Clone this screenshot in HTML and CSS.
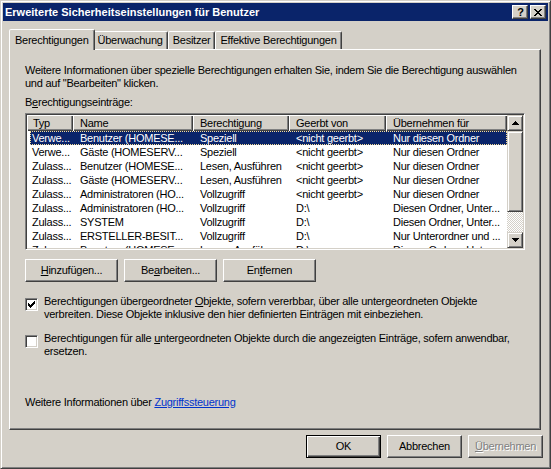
FILE: index.html
```html
<!DOCTYPE html>
<html lang="de">
<head>
<meta charset="utf-8">
<title>Erweiterte Sicherheitseinstellungen für Benutzer</title>
<link rel="stylesheet" href="styles.css">
</head>
<body>
<div class="window">
  <div class="titlebar">
    <span class="title">Erweiterte Sicherheitseinstellungen für Benutzer</span>
    <div class="caption-buttons">
      <span class="cbtn help">?</span>
      <span class="cbtn close">
        <svg width="8" height="7" viewBox="0 0 8 7" shape-rendering="crispEdges"><path d="M0 0h2v1H0zM6 0h2v1H6zM1 1h2v1H1zM5 1h2v1H5zM2 2h4v1H2zM3 3h2v1H3zM2 4h4v1H2zM1 5h2v1H1zM5 5h2v1H5zM0 6h2v1H0zM6 6h2v1H6z" fill="#000"/></svg>
      </span>
    </div>
  </div>
  <div class="client">
    <div class="tabs">
      <div class="tab selected">Berechtigungen</div>
      <div class="tab">Überwachung</div>
      <div class="tab">Besitzer</div>
      <div class="tab">Effektive Berechtigungen</div>
    </div>
    <div class="panel">
      <p class="info">Weitere Informationen über spezielle Berechtigungen erhalten Sie, indem Sie die Berechtigung auswählen<br>und auf "Bearbeiten" klicken.</p>
      <div class="label">B<u>e</u>rechtigungseinträge:</div>
      <div class="listview">
        <div class="lv-main">
          <div class="lv-header">
            <div class="hcell first">Typ</div>
            <div class="hcell">Name</div>
            <div class="hcell">Berechtigung</div>
            <div class="hcell">Geerbt von</div>
            <div class="hcell">Übernehmen für</div>
          </div>
          <div class="lv-rows">
            <div class="row selected"><span>Verwe...</span><span>Benutzer (HOMESE...</span><span>Speziell</span><span>&lt;nicht geerbt&gt;</span><span>Nur diesen Ordner</span></div>
            <div class="row"><span>Verwe...</span><span>Gäste (HOMESERV...</span><span>Speziell</span><span>&lt;nicht geerbt&gt;</span><span>Nur diesen Ordner</span></div>
            <div class="row"><span>Zulass...</span><span>Benutzer (HOMESE...</span><span>Lesen, Ausführen</span><span>&lt;nicht geerbt&gt;</span><span>Nur diesen Ordner</span></div>
            <div class="row"><span>Zulass...</span><span>Gäste (HOMESERV...</span><span>Lesen, Ausführen</span><span>&lt;nicht geerbt&gt;</span><span>Nur diesen Ordner</span></div>
            <div class="row"><span>Zulass...</span><span>Administratoren (HO...</span><span>Vollzugriff</span><span>&lt;nicht geerbt&gt;</span><span>Nur diesen Ordner</span></div>
            <div class="row"><span>Zulass...</span><span>Administratoren (HO...</span><span>Vollzugriff</span><span>D:\</span><span>Diesen Ordner, Unter...</span></div>
            <div class="row"><span>Zulass...</span><span>SYSTEM</span><span>Vollzugriff</span><span>D:\</span><span>Diesen Ordner, Unter...</span></div>
            <div class="row"><span>Zulass...</span><span>ERSTELLER-BESIT...</span><span>Vollzugriff</span><span>D:\</span><span>Nur Unterordner und ...</span></div>
            <div class="row"><span>Zulass...</span><span>Benutzer (HOMESE...</span><span>Lesen, Ausführen</span><span>D:\</span><span>Diesen Ordner, Unter...</span></div>
          </div>
        </div>
        <div class="vscroll">
          <div class="sb-btn">
            <svg width="7" height="4" viewBox="0 0 7 4" shape-rendering="crispEdges"><path d="M3 0h1v1H3zM2 1h3v1H2zM1 2h5v1H1zM0 3h7v1H0z" fill="#000"/></svg>
          </div>
          <div class="sb-thumb"></div>
          <div class="sb-track"></div>
          <div class="sb-btn">
            <svg width="7" height="4" viewBox="0 0 7 4" shape-rendering="crispEdges"><path d="M0 0h7v1H0zM1 1h5v1H1zM2 2h3v1H2zM3 3h1v1H3z" fill="#000"/></svg>
          </div>
        </div>
      </div>
      <div class="btnrow">
        <button class="btn"><u>H</u>inzufügen...</button>
        <button class="btn">Be<u>a</u>rbeiten...</button>
        <button class="btn">En<u>t</u>fernen</button>
      </div>
      <div class="check first-check">
        <span class="box">
          <svg width="7" height="7" viewBox="0 0 7 7" shape-rendering="crispEdges"><path d="M6 0h1v1H6zM5 1h2v1H5zM0 2h1v1H0zM4 2h3v1H4zM0 3h2v1H0zM3 3h3v1H3zM0 4h5v1H0zM1 5h3v1H1zM2 6h1v1H2z" fill="#000"/></svg>
        </span>
        <span class="check-text">Berechtigungen übergeordneter <u>O</u>bjekte, sofern vererbbar, über alle untergeordneten Objekte<br>verbreiten. Diese Objekte inklusive den hier definierten Einträgen mit einbeziehen.</span>
      </div>
      <div class="check second-check">
        <span class="box"></span>
        <span class="check-text">Berechtigungen für alle <u>u</u>ntergeordneten Objekte durch die angezeigten Einträge, sofern anwendbar,<br>ersetzen.</span>
      </div>
      <p class="more">Weitere Informationen über <a href="#" class="link">Zugriffssteuerung</a></p>
    </div>
    <div class="dlg-buttons">
      <button class="btn dlg default">OK</button>
      <button class="btn dlg">Abbrechen</button>
      <button class="btn dlg disabled"><u>Ü</u>bernehmen</button>
    </div>
  </div>
</div>
</body>
</html>
```
FILE: styles.css
```css
* {
  box-sizing: border-box;
  margin: 0;
  padding: 0;
}

html, body {
  background: #d4d0c8;
}

body {
  font: 11px/13px "Liberation Sans", Arial, sans-serif;
  letter-spacing: -0.25px;
  color: #000;
}

.window {
  width: 551px;
  height: 469px;
  border: 1px solid;
  border-color: #d4d0c8 #404040 #404040 #d4d0c8;
  box-shadow: inset 1px 1px #fff, inset -1px -1px #808080;
  padding: 2px;
  display: flex;
  flex-direction: column;
  background: #d4d0c8;
}

/* Title bar */
.titlebar {
  height: 18px;
  flex: none;
  background: #0a246a;
  display: flex;
  align-items: center;
  padding: 0 2px 0 2px;
}

.title {
  flex: 1;
  color: #fff;
  font-weight: bold;
  letter-spacing: 0;
  white-space: nowrap;
}

.caption-buttons {
  display: flex;
  gap: 2px;
}

.cbtn {
  width: 16px;
  height: 14px;
  background: #d4d0c8;
  border: 1px solid;
  border-color: #fff #404040 #404040 #fff;
  box-shadow: inset -1px -1px #808080;
  display: flex;
  align-items: center;
  justify-content: center;
}

.cbtn.help {
  font-weight: bold;
  font-size: 11px;
  line-height: 12px;
  letter-spacing: 0;
  padding-left: 1px;
}

/* Client area */
.client {
  flex: 1;
  display: flex;
  flex-direction: column;
  padding: 8px 6px 8px 6px;
}

.tabs {
  height: 20px;
  flex: none;
  display: flex;
  align-items: flex-start;
  padding-left: 2px;
  margin-right: 1px;
}

.tab {
  margin-top: 2px;
  height: 18px;
  padding: 2px 4px 0 4px;
  border: 1px solid;
  border-bottom: none;
  border-color: #fff #404040 transparent #fff;
  border-radius: 2px 2px 0 0;
  box-shadow: inset -1px 0 #808080;
  background: #d4d0c8;
  white-space: nowrap;
}

.tab.selected {
  margin: 0 -2px 0 -2px;
  height: 21px;
  padding: 4px 5px 0 5px;
  position: relative;
  z-index: 1;
}

.panel {
  flex: 1;
  margin-right: 1px;
  border: 1px solid;
  border-color: #fff #404040 #404040 #fff;
  box-shadow: inset -1px -1px #808080;
  padding: 14px 15px 20px 15px;
  display: flex;
  flex-direction: column;
}

.info,
.check-text {
  white-space: nowrap;
}

.label {
  margin-top: 6px;
}

/* List view */
.listview {
  margin-top: 4px;
  width: 500px;
  height: 137px;
  flex: none;
  background: #fff;
  border: 1px solid;
  border-color: #808080 #fff #fff #808080;
  box-shadow: inset 1px 1px #404040, inset -1px -1px #d4d0c8;
  padding: 1px;
  display: flex;
}

.lv-main {
  width: 480px;
  display: flex;
  flex-direction: column;
}

.lv-header {
  display: grid;
  grid-template-columns: 46px 120px 96px 97px 121px;
  height: 16px;
  flex: none;
}

.hcell {
  background: #d4d0c8;
  box-shadow: inset 1px 1px #fff, inset -1px -1px #404040, inset -2px -2px #808080;
  padding-left: 7px;
  line-height: 16px;
  white-space: nowrap;
  overflow: hidden;
}

.hcell.first {
  padding-left: 6px;
}

.lv-rows {
  height: 117px;
  overflow: hidden;
}

.row {
  display: grid;
  grid-template-columns: 43px 120px 96px 97px 121px;
  margin-left: 3px;
  height: 14px;
  line-height: 14px;
  white-space: nowrap;
}

.row span {
  overflow: hidden;
  padding-left: 7px;
}

.row span:first-child {
  padding-left: 2px;
}

.row.selected {
  background: #0a246a;
  color: #fff;
  outline: 1px dotted #f5db95;
  outline-offset: -1px;
}

.vscroll {
  width: 16px;
  display: flex;
  flex-direction: column;
}

.sb-btn,
.sb-thumb {
  background: #d4d0c8;
  border: 1px solid;
  border-color: #d4d0c8 #404040 #404040 #d4d0c8;
  box-shadow: inset 1px 1px #fff, inset -1px -1px #808080;
}

.sb-btn {
  height: 16px;
  flex: none;
  display: flex;
  align-items: center;
  justify-content: center;
}

.sb-thumb {
  height: 81px;
  flex: none;
}

.sb-track {
  flex: 1;
  background: repeating-conic-gradient(#d4d0c8 0 25%, #fff 0 50%) 0 0 / 2px 2px;
}

/* Buttons */
.btn {
  font: inherit;
  letter-spacing: inherit;
  color: #000;
  width: 93px;
  height: 23px;
  background: #d4d0c8;
  border: 1px solid;
  border-color: #fff #404040 #404040 #fff;
  box-shadow: inset -1px -1px #808080;
  display: flex;
  align-items: center;
  justify-content: center;
  line-height: 13px;
}

.btnrow {
  margin-top: 9px;
  display: flex;
  gap: 6px;
}

.check {
  display: flex;
  align-items: flex-start;
}

.first-check {
  margin-top: 13px;
}

.second-check {
  margin-top: 11px;
}

.box {
  width: 13px;
  height: 13px;
  flex: none;
  margin-top: 3px;
  margin-right: 6px;
  background: #fff;
  border: 1px solid;
  border-color: #808080 #fff #fff #808080;
  box-shadow: inset 1px 1px #404040, inset -1px -1px #d4d0c8;
  display: flex;
  align-items: center;
  justify-content: center;
}

.more {
  margin-top: auto;
}

.link {
  color: #0033cc;
  text-decoration: underline;
}

.dlg-buttons {
  margin-top: 5px;
  margin-right: -1px;
  display: flex;
  justify-content: flex-end;
  gap: 6px;
}

.btn.dlg {
  width: 75px;
}

.btn.default {
  border: 1px solid #000;
  box-shadow: inset 1px 1px #fff, inset -1px -1px #404040, inset -2px -2px #808080;
}

.btn.disabled {
  color: #808080;
  text-shadow: 1px 1px 0 #fff;
}
```
